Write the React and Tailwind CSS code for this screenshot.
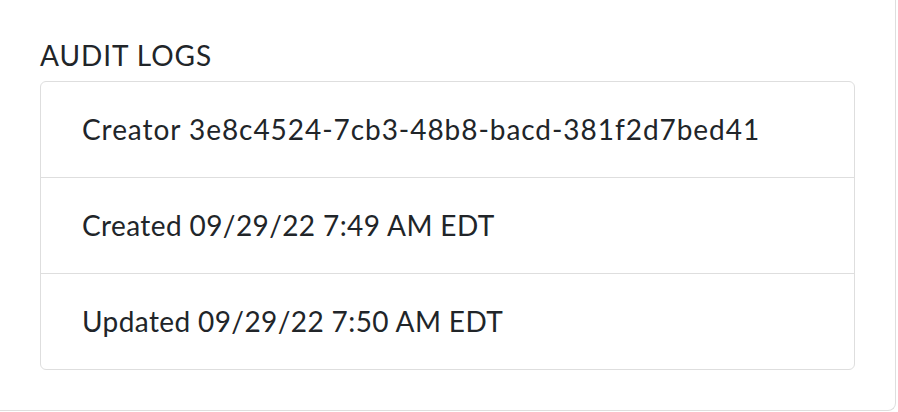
export default function App() {
  const rows = [
    { t: "Creator 3e8c4524-7cb3-48b8-bacd-381f2d7bed41", c: "tracking-[0.95px]" },
    { t: "Created 09/29/22 7:49 AM EDT", c: "tracking-[0.4px]" },
    { t: "Updated 09/29/22 7:50 AM EDT", c: "tracking-[0.4px]" },
  ];
  return (
    <div className="w-[898px] h-[412px] bg-white overflow-hidden" style={{ fontFamily: "Lato, 'Noto Sans', sans-serif" }}>
      <div className="w-[896px] h-[411px] border-r border-b border-[#dedede] rounded-br-[8px] pl-[40px] pt-[40px] text-[#212529]">
        <div className="h-[41px] text-[28px] leading-[30px] tracking-[0.95px]">AUDIT LOGS</div>
        <div className="w-[815px] border border-[#dedede] rounded-[6px] flex flex-col">
          {rows.map((r, i) => (
            <div
              key={i}
              className={`h-[95px] flex items-center pl-[41px] pb-[2px] text-[28px] ${r.c} ${i > 0 ? "border-t border-[#dedede] h-[96px]" : ""}`}
            >
              {r.t}
            </div>
          ))}
        </div>
      </div>
    </div>
  );
}
